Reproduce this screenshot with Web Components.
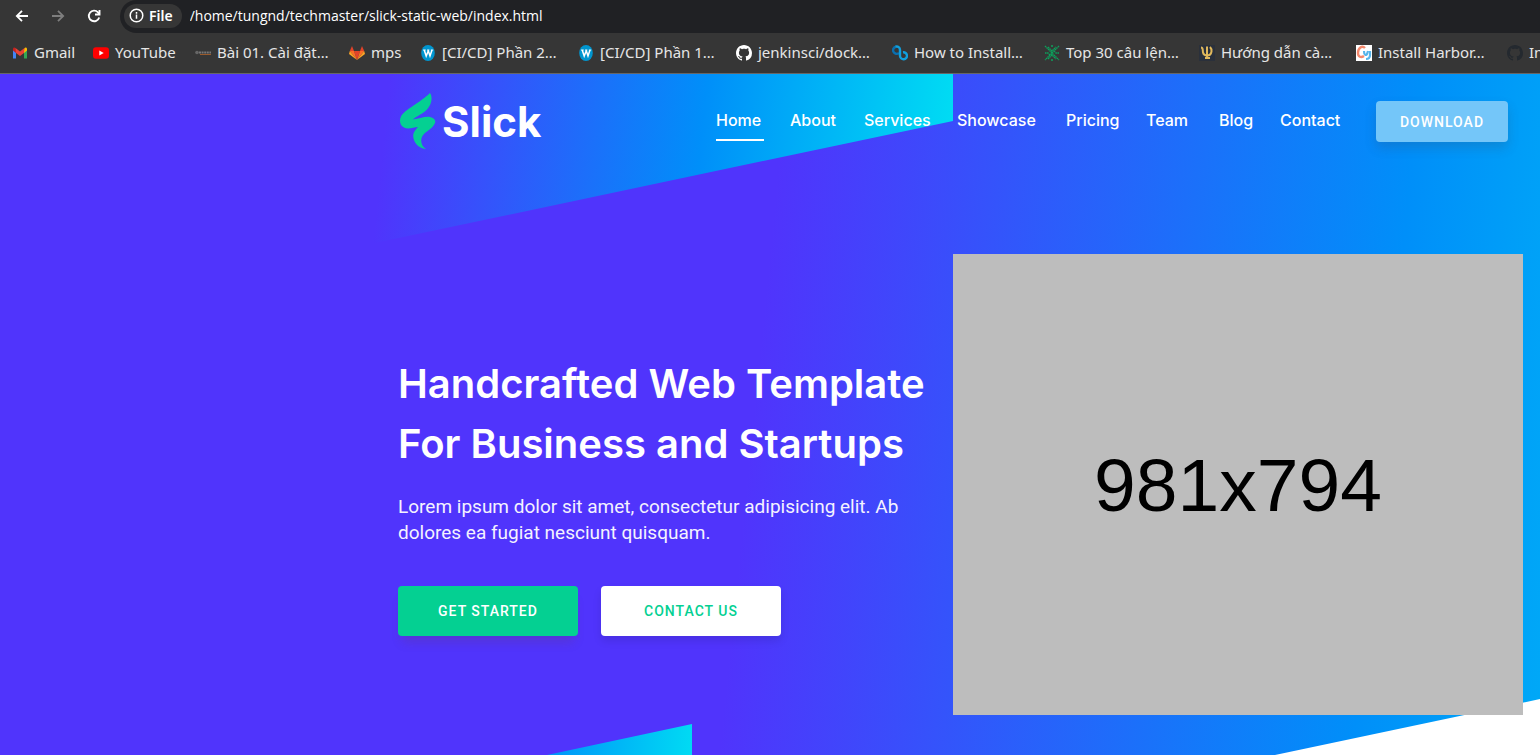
<!DOCTYPE html>
<html lang="en">
<head>
<meta charset="utf-8">
<meta name="viewport" content="width=device-width, initial-scale=1">
<title>Slick</title>
<style>
  body { margin: 0; min-height: 100vh; display: flex; flex-direction: column; overflow: hidden; font-family: Inter, sans-serif; background: #fff; }
  hero-section { flex: 1; }
</style>
</head>
<body>
<browser-toolbar></browser-toolbar>
<bookmarks-bar>
  <bookmark-link icon="gmail">Gmail</bookmark-link>
  <bookmark-link icon="youtube">YouTube</bookmark-link>
  <bookmark-link icon="strip">Bài 01. Cài đặt…</bookmark-link>
  <bookmark-link icon="gitlab">mps</bookmark-link>
  <bookmark-link icon="wiki">[CI/CD] Phần 2…</bookmark-link>
  <bookmark-link icon="wiki">[CI/CD] Phần 1…</bookmark-link>
  <bookmark-link icon="github">jenkinsci/dock…</bookmark-link>
  <bookmark-link icon="loop">How to Install…</bookmark-link>
  <bookmark-link icon="snow">Top 30 câu lện…</bookmark-link>
  <bookmark-link icon="trident">Hướng dẫn cà…</bookmark-link>
  <bookmark-link icon="cy">Install Harbor…</bookmark-link>
  <bookmark-link icon="githubdark">In</bookmark-link>
</bookmarks-bar>
<hero-section>
  <site-header slot="header"></site-header>
  <hero-copy slot="copy">
    <span slot="title">Handcrafted Web Template<br>For Business and Startups</span>
    <span slot="text">Lorem ipsum dolor sit amet, consectetur adipisicing elit. Ab<br>dolores ea fugiat nesciunt quisquam.</span>
    <slick-button slot="actions" kind="primary">GET STARTED</slick-button>
    <slick-button slot="actions" kind="light">CONTACT US</slick-button>
  </hero-copy>
  <image-placeholder slot="media">981x794</image-placeholder>
</hero-section>

<script>
const define = (name, html) => customElements.define(name, class extends HTMLElement {
  constructor() {
    super();
    this.attachShadow({ mode: 'open' }).innerHTML = html;
  }
});

const octocat = fill => `<svg viewBox="0 0 16 16"><path fill="${fill}" d="M8 0C3.58 0 0 3.58 0 8c0 3.54 2.29 6.53 5.47 7.59.4.07.55-.17.55-.38 0-.19-.01-.82-.01-1.49-2.01.37-2.53-.49-2.69-.94-.09-.23-.48-.94-.82-1.13-.28-.15-.68-.52-.01-.53.63-.01 1.08.58 1.23.82.72 1.21 1.87.87 2.33.66.07-.52.28-.87.51-1.07-1.78-.2-3.64-.89-3.64-3.95 0-.87.31-1.59.82-2.15-.08-.2-.36-1.02.08-2.12 0 0 .67-.21 2.2.82.64-.18 1.32-.27 2-.27s1.36.09 2 .27c1.53-1.04 2.2-.82 2.2-.82.44 1.1.16 1.92.08 2.12.51.56.82 1.27.82 2.15 0 3.07-1.87 3.75-3.65 3.95.29.25.54.73.54 1.48 0 1.07-.01 1.93-.01 2.2 0 .21.15.46.55.38A8.01 8.01 0 0 0 16 8c0-4.42-3.58-8-8-8z"/></svg>`;

const ICONS = {
  gmail: `<svg viewBox="0 0 16 16"><path fill="#4285f4" d="M1 4v9.500H4V7z"/><path fill="#34a853" d="M12 7v6.500h3V4z"/><path fill="#fbbc04" d="M12 4.500V8l3-2.500V4c0-1.500-1.500-2-2.500-1z"/><path fill="#c5221f" d="M1 4v1.500L4 8V4.500L3.500 3C2.500 2 1 2.500 1 4z"/><path fill="#ea4335" d="M3.500 3 8 6.500 12.500 3l-.5 5-4 3-4-3z"/></svg>`,
  youtube: `<svg viewBox="0 0 16 16"><rect y="2.300" width="16" height="11.500" rx="3" fill="#f00"/><path fill="#fff" d="m6.300 5.600 4.400 2.500-4.400 2.500z"/></svg>`,
  strip: `<svg viewBox="0 0 16 16"><circle cx="2" cy="7.500" r="1.800" fill="#666"/><path stroke="#777" stroke-width="2" stroke-dasharray="2 .6" d="M4 7.500h12"/><path stroke="#9a5a2c" d="M5 9.500h11"/></svg>`,
  gitlab: `<svg viewBox="0 0 16 16"><path fill="#e24329" d="m8 15 3-9H5z"/><path fill="#fc6d26" d="M8 15 5 6H.800zM8 15l3-9h4.200z"/><path fill="#fca326" d="M.800 6 0 9l8 6zM15.200 6 16 9l-8 6z"/><path fill="#e24329" d="M.800 6H5L3 1zM15.200 6H11l2-5z"/></svg>`,
  wiki: `<svg viewBox="0 0 16 16"><ellipse cx="8" cy="8" rx="6.800" ry="8" fill="#0095cf"/><path fill="none" stroke="#fff" stroke-width="1.500" d="M4.200 5l2 6L8.400 5.500M8 5l2 6 2-6"/><path stroke="#fff" stroke-width=".9" d="M3 5h2.800M7 5h2.400M10.800 5h2.400"/></svg>`,
  github: octocat('#fff'),
  githubdark: octocat('#24292f'),
  loop: `<svg viewBox="0 0 16 16" fill="none" stroke-width="2.400"><path stroke="#0b6fae" d="M7 8A3.600 3.600 0 1 1 4 1.700"/><path stroke="#109fdc" d="M3.500 1.700C6 1 8 2.500 8 5v6a3.500 3.500 0 1 0 3-3.700"/></svg>`,
  snow: `<svg viewBox="0 0 16 16" fill="none" stroke="#0ca15c" stroke-width="1.300"><path stroke-dasharray="1.600 .5" d="M1 1l14 14M15 1 1 15M4 2l4 4 4-4M4 14l4-4 4 4M1 8h3l2 2M15 8h-3l-2-2"/><path d="M7 1h2M7 15h2"/></svg>`,
  trident: `<svg viewBox="0 0 16 16"><path fill="#2a303b" d="M0 0h16v16H0z"/><path fill="none" stroke="#e0b85c" stroke-width="2" d="M2 2.500c2.500 0 1.500 3 2 5 .5 2 2 3 4 3s4-1 4.500-4c.3-2-.5-3.500-1.500-4.500M8 1.500V13M6 13h5"/></svg>`,
  cy: `<svg viewBox="0 0 16 16"><path fill="#fff" d="M0 0h16v16H0z"/><path fill="none" stroke="#f4886c" stroke-width="2.400" d="M9 3C6 0 2 3 2 8c0 4 3 5 6 3"/><path fill="none" stroke="#56b4ea" stroke-width="2.200" d="M8 6c0 4 2 5 3 3l1-3M14 6v4c0 3-2 4-4 4"/></svg>`
};

define('browser-toolbar', `
  <style>
    :host { display: flex; height: 33px; padding-left: 14px; background: #363636; }
    button { border: 0; padding: 0; background: none; color: #fff; display: flex; }
    .tool { align-items: center; width: 16px; height: 32px; margin-right: 20px; }
    .tool svg { width: 16px; height: 16px; }
    button:disabled { color: #7e7e7e; }
    .reload { margin-right: 18px; }
    form { flex: 1; display: flex; align-items: center; gap: 8px; box-sizing: border-box; height: 33px; padding: 0 0 2px 4px; background: #202124; border-radius: 17px 0 0 17px; }
    .chip { align-items: center; gap: 5px; height: 24px; padding: 0 9px 0 5px; border-radius: 12px; background: #363636; font: 600 14px/24px "Noto Sans", sans-serif; }
    .chip svg { width: 15px; height: 15px; }
    input { flex: 1; min-width: 0; padding: 0; border: 0; outline: 0; background: none; color: #fff; font: 14px/24px "Open Sans", sans-serif; }
  </style>
  <button class="tool" aria-label="Back"><svg viewBox="0 0 16 16" fill="none" stroke="currentColor" stroke-width="1.800"><path d="M14 8H3M8 2.800 2.800 8 8 13.200"/></svg></button>
  <button class="tool" aria-label="Forward" disabled><svg viewBox="0 0 16 16" fill="none" stroke="currentColor" stroke-width="1.800"><path d="M2 8h11M8 2.800 13.200 8 8 13.200"/></svg></button>
  <button class="tool reload" aria-label="Reload"><svg viewBox="0 0 16 16" fill="none" stroke="currentColor" stroke-width="1.900"><path d="M13.200 9.500A5.300 5.300 0 1 1 12 4.300L13.500 6"/><path d="M13.500 2v4.500H9"/></svg></button>
  <form>
    <button class="chip" type="button"><svg viewBox="0 0 16 16" fill="none" stroke="currentColor" stroke-width="1.600"><circle cx="8" cy="8" r="6.700"/><path d="M8 7v4.500M8 4.300v1.700"/></svg>File</button>
    <input aria-label="Address" value="/home/tungnd/techmaster/slick-static-web/index.html">
  </form>`);

define('bookmarks-bar', `
  <style>
    :host { display: grid; grid-template-columns: 81px 102px 154px 71px 158px 158px 156px 152px 155px 157px 151px 80px; align-items: center; height: 40px; padding-left: 12px; overflow: hidden; background: #363636; border-bottom: 1px solid #666; }
  </style>
  <slot></slot>`);

customElements.define('bookmark-link', class extends HTMLElement {
  connectedCallback() {
    this.attachShadow({ mode: 'open' }).innerHTML = `
      <style>
        :host { display: block; }
        a { display: flex; align-items: center; gap: 6px; color: #e6e6e6; text-decoration: none; white-space: nowrap; font: 15px/24px "Noto Sans", sans-serif; }
        span { padding-bottom: 2px; }
        svg { width: 16px; height: 16px; flex: none; }
      </style>
      <a href="#">${ICONS[this.getAttribute('icon')]}<span><slot></slot></span></a>`;
  }
});

define('hero-section', `
  <style>
    :host { display: block; position: relative; box-sizing: border-box; padding: 27px 17px 40px 398px; color: #fff; }
    .backdrop { position: absolute; inset: 0; width: 100%; height: 100%; }
    .content { position: relative; display: grid; gap: 112px 0; }
    .row { display: grid; grid-template-columns: 555fr 570fr; align-items: center; }
  </style>
  <svg class="backdrop" viewBox="0 0 1540 681" preserveAspectRatio="none" aria-hidden="true">
    <defs>
      <linearGradient id="base" gradientUnits="userSpaceOnUse" x1="788" y1="0" x2="1992" y2="122">
        <stop offset="0" stop-color="#5034fc"/><stop offset=".52" stop-color="#008ff9"/><stop offset="1" stop-color="#00dff3"/>
      </linearGradient>
      <linearGradient id="top" gradientUnits="userSpaceOnUse" x1="390" y1="0" x2="962" y2="57">
        <stop offset="0" stop-color="#5034fc"/><stop offset=".55" stop-color="#008ff9"/><stop offset="1" stop-color="#00dff3"/>
      </linearGradient>
      <linearGradient id="low" gradientUnits="userSpaceOnUse" x1="380" y1="650" x2="700" y2="680">
        <stop offset="0" stop-color="#5034fc"/><stop offset=".5" stop-color="#008ff9"/><stop offset="1" stop-color="#00dff3"/>
      </linearGradient>
    </defs>
    <path fill="url(#base)" d="M0 0H1540V625L1275 681H0z"/>
    <path fill="url(#top)" d="M370 0H953V47L370 170z"/>
    <path fill="url(#low)" d="M547 681 692 650V681z"/>
  </svg>
  <div class="content">
    <slot name="header"></slot>
    <div class="row"><slot name="copy"></slot><slot name="media"></slot></div>
  </div>`);

define('slick-logo', `
  <style>
    :host { display: block; }
    a { display: flex; align-items: center; gap: 6px; color: #fff; text-decoration: none; font: 700 42px/56px Inter, sans-serif; }
    svg { width: 36px; height: 57px; margin-left: 2px; }
  </style>
  <a href="#"><svg viewBox="0 0 36 57" aria-hidden="true"><path fill="#04d092" d="M30 0C32 3 32 7 30.500 11C28 17 23 20 18 23C16 24 14 25.500 12.500 26.500C19 26 25 23 30 24C34 25 36 27 35 30C33 35 27 38 24 41C20 45 20 52 26 56C18 55 13 49 13.200 42C13.500 39 16 36 18 34C14 34 8 37 4 34.500C0 33 -1 27 1 23.500C4 17 21 9 30 0z"/></svg><span>Slick</span></a>`);

define('site-nav', `
  <style>
    :host { display: block; }
    nav { display: grid; grid-template-columns: 48px 48px 67px 83px 54px 47px 35px 66px; gap: 26px; }
    a { color: #fff; text-decoration: none; white-space: nowrap; font: 500 16px/38px Inter, sans-serif; border-bottom: 2px solid transparent; }
    a[aria-current] { border-color: #fff; }
  </style>
  <nav><a href="#" aria-current="page">Home</a><a href="#">About</a><a href="#">Services</a><a href="#">Showcase</a><a href="#">Pricing</a><a href="#">Team</a><a href="#">Blog</a><a href="#">Contact</a></nav>`);

define('slick-button', `
  <style>
    :host { display: block; }
    button { width: 180px; height: 50px; padding: 0; border: 0; border-radius: 4px; color: #fff; background: #04d092; font: 500 14px/20px Roboto, sans-serif; letter-spacing: 1px; box-shadow: 0 10px 10px -4px rgba(110,60,60,.2); }
    :host([kind=light]) button { background: #fff; color: #04d092; box-shadow: 0 5px 8px rgba(0,0,0,.1); }
    :host([kind=download]) button { width: 132px; height: 41px; background: #74c6f9; box-shadow: 0 6px 12px rgba(60,60,80,.2); }
  </style>
  <button type="button"><slot></slot></button>`);

define('site-header', `
  <style>
    :host { display: flex; align-items: center; height: 41px; padding-right: 15px; }
    site-nav { align-self: flex-start; margin: 0 30px 0 auto; }
  </style>
  <slick-logo></slick-logo><site-nav></site-nav><slick-button kind="download">DOWNLOAD</slick-button>`);

define('hero-copy', `
  <style>
    :host { display: block; padding-top: 20px; }
    h1 { margin: 0; white-space: nowrap; font: 600 40px/60px Inter, sans-serif; }
    p { margin: 20px 0 40px; white-space: nowrap; font: 19px/26px Roboto, sans-serif; color: #f4f2ff; }
    .actions { display: flex; gap: 23px; }
  </style>
  <h1><slot name="title"></slot></h1>
  <p><slot name="text"></slot></p>
  <div class="actions"><slot name="actions"></slot></div>`);

define('image-placeholder', `
  <style>
    :host { display: flex; align-items: center; justify-content: center; aspect-ratio: 570 / 461; background: #bdbdbd; color: #000; font: 75px/86px "Liberation Sans", Arial, sans-serif; }
  </style>
  <span><slot></slot></span>`);
</script>
</body>
</html>
